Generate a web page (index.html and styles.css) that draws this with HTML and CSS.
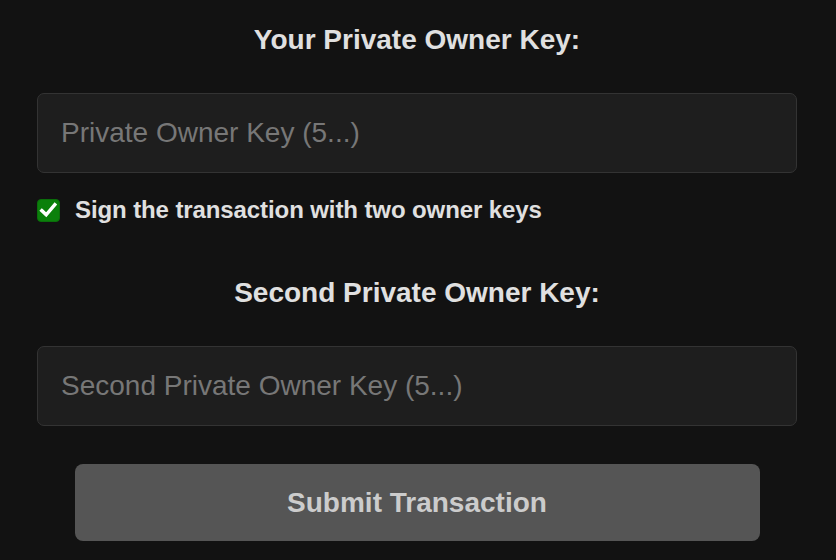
FILE: index.html
```html
<!DOCTYPE html>
<html lang="en">
<head>
  <meta charset="UTF-8">
  <meta name="viewport" content="width=device-width, initial-scale=1.0">
  <title>Submit Transaction</title>
  <link rel="stylesheet" href="styles.css">
</head>
<body>
  <form class="tx-form" id="txForm">
    <h3 class="key-title">Your Private Owner Key:</h3>
    <input type="password" id="ownerKey" class="key-input" placeholder="Private Owner Key (5...)">

    <label class="check-row" for="twoKeys">
      <input type="checkbox" id="twoKeys" class="check-input" checked>
      <span class="check-box">
        <svg width="23" height="23" viewBox="0 0 23 23">
          <polyline points="4.8,11.6 9.2,15.8 17.8,5.6" fill="none" stroke="#ffffff" stroke-width="3.4" stroke-linecap="square"/>
        </svg>
      </span>
      <span class="check-label">Sign the transaction with two owner keys</span>
    </label>

    <div class="second-key" id="secondKey">
      <h3 class="key-title key-title-second">Second Private Owner Key:</h3>
      <input type="password" id="secondOwnerKey" class="key-input" placeholder="Second Private Owner Key (5...)">
    </div>

    <button type="submit" class="submit-button" id="submitButton" disabled>Submit Transaction</button>
  </form>
</body>
</html>
```

FILE: styles.css
```css
:root {
  --background-color: #121212;
  --input-background: #1e1e1e;
  --border-color: #333333;
  --text-primary: #e0e0e0;
  --text-placeholder: #777777;
  --button-background: #555555;
  --button-text: #cccccc;
  --check-color: #0b800b;
}

* {
  margin: 0;
  padding: 0;
  box-sizing: border-box;
  font-family: 'Liberation Sans', Arial, sans-serif;
}

body {
  background-color: var(--background-color);
  color: var(--text-primary);
  min-height: 100vh;
}

.tx-form {
  width: 760px;
  margin: 0 37px;
  padding-top: 24px;
  display: flex;
  flex-direction: column;
}

.key-title {
  font-size: 28px;
  line-height: 32px;
  font-weight: 700;
  text-align: center;
  color: var(--text-primary);
}

.key-title-second {
  margin-top: 53px;
}

.key-input {
  margin-top: 37px;
  height: 80px;
  padding: 0 23px;
  background-color: var(--input-background);
  border: 1px solid var(--border-color);
  border-radius: 7px;
  font-size: 28px;
  color: var(--text-primary);
  outline: none;
}

.key-input::placeholder {
  color: var(--text-placeholder);
}

.check-row {
  margin-top: 23px;
  display: flex;
  align-items: center;
  gap: 15px;
  cursor: pointer;
}

.check-input {
  display: none;
}

.check-box {
  display: flex;
  width: 23px;
  height: 23px;
  background-color: var(--check-color);
  border: 1px solid #0a6e0a;
  border-radius: 4px;
  overflow: hidden;
}

.check-box svg {
  margin: -1px;
}

.check-label {
  font-size: 24px;
  line-height: 28px;
  font-weight: 700;
  letter-spacing: -0.1px;
}

.second-key {
  display: flex;
  flex-direction: column;
}

.submit-button {
  width: 685px;
  height: 77px;
  margin: 38px auto 0;
  background-color: var(--button-background);
  color: var(--button-text);
  border: none;
  border-radius: 8px;
  font-size: 28px;
  font-weight: 700;
}
```
